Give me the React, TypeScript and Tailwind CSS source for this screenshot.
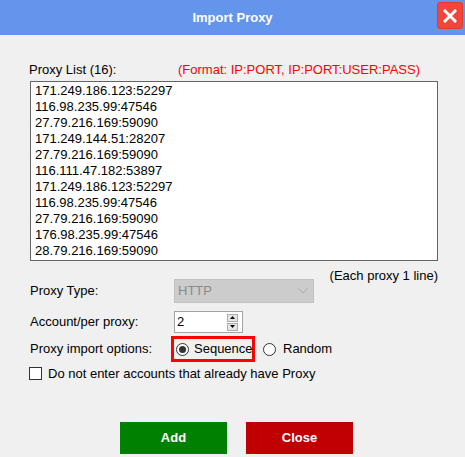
import React from 'react';

const proxies = [
  '171.249.186.123:52297',
  '116.98.235.99:47546',
  '27.79.216.169:59090',
  '171.249.144.51:28207',
  '27.79.216.169:59090',
  '116.111.47.182:53897',
  '171.249.186.123:52297',
  '116.98.235.99:47546',
  '27.79.216.169:59090',
  '176.98.235.99:47546',
  '28.79.216.169:59090',
];

const Radio: React.FC<{ checked?: boolean }> = ({ checked }) => (
  <span className="w-[13px] h-[13px] rounded-full border border-[#333] bg-white flex items-center justify-center shrink-0">
    {checked && <span className="w-[7px] h-[7px] rounded-full bg-[#333]" />}
  </span>
);

export default function App() {
  return (
    <div className="w-[465px] h-[457px] bg-[#f0f0f0] font-['Liberation_Sans',Arial,sans-serif] text-[13px] text-black overflow-hidden">
      {/* Title bar */}
      <div className="relative h-[35px] bg-[#6495ed] flex items-center justify-center">
        <span className="text-white font-bold text-[13px] leading-[16px]">Import Proxy</span>
        <button className="absolute right-[2px] top-[2px] w-[26px] h-[27px] rounded-[3px] bg-[#f2463a] border border-[#e0392e] flex items-center justify-center">
          <svg width="14" height="14" viewBox="0 0 14 14">
            <path d="M2 2L12 12M12 2L2 12" stroke="white" strokeWidth="3" strokeLinecap="square" />
          </svg>
        </button>
      </div>

      <div className="pl-[30px] pr-[27px]">
        {/* List header */}
        <div className="mt-[27px] flex leading-[16px] h-[16px]">
          <span className="-ml-[1px] w-[149px]">Proxy List (16):</span>
          <span className="text-[#ff0000]">(Format: IP:PORT, IP:PORT:USER:PASS)</span>
        </div>

        {/* List box */}
        <div className="mt-[3px] w-[408px] h-[180px] border border-[#646464] bg-white pl-[4px] pt-[1px] leading-[16px] overflow-hidden">
          {proxies.map((p, i) => (
            <div key={i}>{p}</div>
          ))}
        </div>

        <div className="mt-[8px] h-[14px] leading-[14px] text-right w-[408px]">(Each proxy 1 line)</div>

        {/* Proxy type */}
        <div className="-mt-[4px] flex items-center h-[24px]">
          <span className="w-[144px]">Proxy Type:</span>
          <div className="w-[140px] h-[24px] bg-[#cccccc] border border-[#c2c2c2] flex items-center justify-between pl-[3px] pr-[5px]">
            <span className="text-[#8a8a8a]">HTTP</span>
            <svg width="10" height="6" viewBox="0 0 10 6">
              <path d="M0.5 0.5L5 5L9.5 0.5" stroke="#a8a8a8" fill="none" strokeWidth="1" />
            </svg>
          </div>
        </div>

        {/* Account per proxy */}
        <div className="mt-[8px] flex items-center h-[22px]">
          <span className="w-[144px]">Account/per proxy:</span>
          <div className="w-[69px] h-[22px] border border-[#a3a3a3] bg-white flex items-center justify-between pl-[2px] pr-[4px]">
            <span>2</span>
            <div className="flex flex-col gap-[1px]">
              <div className="w-[11px] h-[8px] bg-[#e6e6e6] border border-[#adadad] flex items-center justify-center">
                <svg width="5" height="3" viewBox="0 0 5 3"><path d="M0 3L2.5 0L5 3Z" fill="#000" /></svg>
              </div>
              <div className="w-[11px] h-[8px] bg-[#e6e6e6] border border-[#adadad] flex items-center justify-center">
                <svg width="5" height="3" viewBox="0 0 5 3"><path d="M0 0L2.5 3L5 0Z" fill="#000" /></svg>
              </div>
            </div>
          </div>
        </div>

        {/* Import options */}
        <div className="mt-[3px] flex items-center h-[26px]">
          <span className="w-[141px]">Proxy import options:</span>
          <div className="w-[84px] h-[26px] border-[3px] border-[#ff0000] flex items-center gap-[5px] pl-[2px]">
            <Radio checked />
            <span>Sequence</span>
          </div>
          <div className="ml-[8px] flex items-center gap-[7px]">
            <Radio />
            <span>Random</span>
          </div>
        </div>

        {/* Checkbox */}
        <div className="mt-[5px] flex items-center gap-[6px] h-[13px] -ml-[1px]">
          <span className="w-[13px] h-[13px] border border-[#333] bg-white shrink-0" />
          <span>Do not enter accounts that already have Proxy</span>
        </div>
      </div>

      {/* Buttons */}
      <div className="mt-[42px] pl-[120px] flex gap-[19px]">
        <button className="w-[107px] h-[32px] bg-[#008000] text-white font-bold text-[13px]">Add</button>
        <button className="w-[107px] h-[32px] bg-[#c00000] text-white font-bold text-[13px]">Close</button>
      </div>
    </div>
  );
}
